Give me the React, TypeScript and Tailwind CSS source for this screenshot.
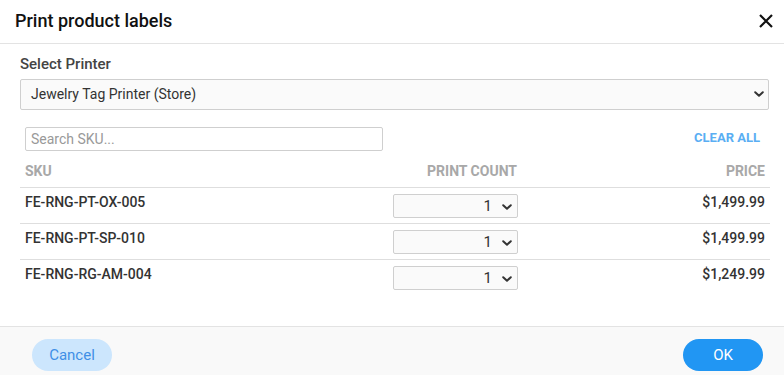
import React from "react";

const Chevron = ({ className }: { className: string }) => (
  <svg
    width="10"
    height="6"
    viewBox="0 0 10 6"
    className={"pointer-events-none absolute " + className}
  >
    <path d="M1.2 1.2L5 4.8L8.8 1.2" stroke="#333" strokeWidth="2" fill="none" strokeLinecap="round" strokeLinejoin="round" />
  </svg>
);

const rows = [
  { sku: "FE-RNG-PT-OX-005", price: "$1,499.99" },
  { sku: "FE-RNG-PT-SP-010", price: "$1,499.99" },
  { sku: "FE-RNG-RG-AM-004", price: "$1,249.99" },
];

export default function App() {
  return (
    <div className="w-[784px] h-[375px] bg-white flex flex-col font-['Roboto',sans-serif] overflow-hidden">
      <div className="h-[44px] shrink-0 border-b border-[#e3e3e3] flex items-center justify-between pl-[15px] pr-[11px]">
        <div className="text-[18px] font-medium text-[#111] leading-6 -mt-[2px]">Print product labels</div>
        <svg width="14" height="14" viewBox="0 0 14 14" className="-mt-[2px]">
          <path d="M1 1L13 13M13 1L1 13" stroke="#111" strokeWidth="2.2" />
        </svg>
      </div>

      <div className="flex-1 pl-5 pr-[15px] pt-[10px]">
        <div className="text-[15px] font-medium text-[#444] leading-5">Select Printer</div>
        <div className="relative mt-[5px] h-[31px] border border-[#cfcfcf] bg-[#fafafa] rounded-[2px] flex items-center pl-[10px] text-[14px] text-[#333]">
          Jewelry Tag Printer (Store)
          <Chevron className="right-[4px] top-[11px]" />
        </div>

        <div className="mt-[17px] w-[750px]">
          <div className="px-[5px] flex items-center justify-between h-[24px]">
            <div className="w-[358px] h-[24px] border border-[#cfcfcf] rounded-[2px] flex items-center pl-[5px] text-[14px] text-[#999]">
              Search SKU...
            </div>
            <div className="text-[13px] font-bold text-[#5aaef3] mr-[5px] -mt-[3px]">CLEAR ALL</div>
          </div>

          <div className="h-[37px] pt-[12px] flex px-[5px] border-b border-[#dedede] text-[14px] font-bold text-[#a8a8a8] leading-4">
            <div className="flex-1">SKU</div>
            <div className="text-right pr-px">PRINT COUNT</div>
            <div className="w-[247px] text-right">PRICE</div>
          </div>

          {rows.map((r, i) => (
            <div
              key={r.sku}
              className={
                "h-[36px] flex items-start px-[5px] " +
                (i < rows.length - 1 ? "border-b border-[#dedede]" : "")
              }
            >
              <div className="flex-1 pt-[4px] text-[14px] font-medium text-[#333] leading-5">{r.sku}</div>
              <div className="relative mt-[6px] w-[125px] h-[24px] border border-[#cfcfcf] bg-[#fafafa] rounded-[2px] flex items-center justify-end pr-[25px] text-[15px] text-[#333]">
                1
                <Chevron className="right-[5px] top-[9px]" />
              </div>
              <div className="w-[247px] pt-[4px] text-right text-[14px] font-medium text-[#333] leading-5">{r.price}</div>
            </div>
          ))}
        </div>
      </div>

      <div className="h-[49px] shrink-0 border-t border-[#e3e3e3] bg-[#f9f9f9] flex items-start justify-between pt-[12px] pl-[32px] pr-[21px]">
        <button className="w-[80px] h-[32px] rounded-full bg-[#cce6fd] text-[#3f8fe6] text-[15px]">Cancel</button>
        <button className="w-[80px] h-[32px] rounded-full bg-[#2196f3] text-white text-[15px]">OK</button>
      </div>
    </div>
  );
}
